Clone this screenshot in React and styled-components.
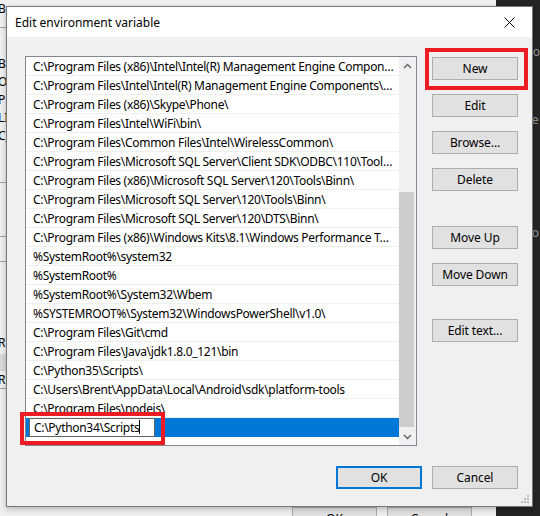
import React from "react";
import styled, { createGlobalStyle } from "styled-components";

const paths = [
	"C:\\Program Files (x86)\\Intel\\Intel(R) Management Engine Components\\DAL",
	"C:\\Program Files\\Intel\\Intel(R) Management Engine Components\\IPT",
	"C:\\Program Files (x86)\\Skype\\Phone\\",
	"C:\\Program Files\\Intel\\WiFi\\bin\\",
	"C:\\Program Files\\Common Files\\Intel\\WirelessCommon\\",
	"C:\\Program Files\\Microsoft SQL Server\\Client SDK\\ODBC\\110\\Tools\\Binn\\",
	"C:\\Program Files (x86)\\Microsoft SQL Server\\120\\Tools\\Binn\\",
	"C:\\Program Files\\Microsoft SQL Server\\120\\Tools\\Binn\\",
	"C:\\Program Files\\Microsoft SQL Server\\120\\DTS\\Binn\\",
	"C:\\Program Files (x86)\\Windows Kits\\8.1\\Windows Performance Toolkit\\",
	"%SystemRoot%\\system32",
	"%SystemRoot%",
	"%SystemRoot%\\System32\\Wbem",
	"%SYSTEMROOT%\\System32\\WindowsPowerShell\\v1.0\\",
	"C:\\Program Files\\Git\\cmd",
	"C:\\Program Files\\Java\\jdk1.8.0_121\\bin",
	"C:\\Python35\\Scripts\\",
	"C:\\Users\\Brent\\AppData\\Local\\Android\\sdk\\platform-tools",
	"C:\\Program Files\\nodejs\\",
];

// bits of the window behind the dialog that peek out on the left
const backRows = [
	{ text: "B", h: 28, line: true },
	{ text: "", h: 27 },
	{ text: "B", h: 18 },
	{ text: "O", h: 18 },
	{ text: "P", h: 18 },
	{ text: "LI", h: 18 },
	{ text: "C_", h: 56, line: true },
	{ text: "", h: 54, line: true },
	{ text: "", h: 25, line: true },
	{ text: "", h: 72 },
	{ text: "R", h: 20 },
	{ text: "", h: 17, shade: true },
	{ text: "Rc", h: 18, line: true },
];

const GlobalStyle = createGlobalStyle`
	body {
		margin: 0;
		background: #f0f0f0;
	}
`;

const Desktop = styled.div`
	position: relative;
	width: 540px;
	height: 516px;
	overflow: hidden;
	display: flex;
	font-family: "Noto Sans", "Liberation Sans", sans-serif;
	font-size: 12px;
	color: #000;
`;

const BackWindow = styled.div`
	width: 502px;
	background: #f0f0f0;
	display: flex;
	flex-direction: column;
`;

const BackRow = styled.div`
	height: ${(p) => p.$h}px;
	flex-shrink: 0;
	box-sizing: border-box;
	margin-left: -2px;
	line-height: 18px;
	background: ${(p) => (p.$shade ? "#dadada" : "transparent")};
	border-bottom: ${(p) => (p.$line ? "1px solid #a0a0a0" : "none")};
	overflow: hidden;
	white-space: nowrap;
`;

const BackFooter = styled.div`
	margin-top: auto;
	display: flex;
	gap: 10px;
	padding-left: 292px;
	margin-bottom: -14px;
`;

const BackButton = styled.div`
	width: 85px;
	height: 23px;
	box-sizing: border-box;
	border: 1px solid #adadad;
	background: #e1e1e1;
	text-align: center;
	line-height: 21px;
`;

const DarkPane = styled.div`
	flex: 1;
	background: #252526;
	color: #9a9a9a;
	padding-left: 31px;
	display: flex;
	flex-direction: column;
`;

const DarkText = styled.div`
	height: ${(p) => p.$h}px;
	line-height: 16px;
	white-space: nowrap;
`;

const Dialog = styled.div`
	position: absolute;
	left: 6px;
	top: 6px;
	width: 527px;
	height: 501px;
	box-sizing: border-box;
	border: 1px solid #777;
	background: #f0f0f0;
	display: flex;
	flex-direction: column;
	box-shadow: 0 2px 6px rgba(0, 0, 0, 0.25);
`;

const TitleBar = styled.div`
	height: 30px;
	flex-shrink: 0;
	background: #fff;
	display: flex;
	align-items: center;
	padding-left: 8px;
`;

const Title = styled.span`
	flex: 1;
	font-size: 12px;
`;

const CloseButton = styled.div`
	width: 46px;
	height: 30px;
	display: flex;
	align-items: center;
	justify-content: center;
`;

const Body = styled.div`
	flex: 1;
	display: grid;
	grid-template-columns: 392px 86px;
	grid-template-rows: 390px auto;
	column-gap: 15px;
	row-gap: 20px;
	padding: 19px 14px 0 18px;
	position: relative;
`;

const ListBox = styled.div`
	box-sizing: border-box;
	border: 1px solid #828790;
	background: #fff;
	display: flex;
`;

const Rows = styled.div`
	flex: 1;
	min-width: 0;
	display: flex;
	flex-direction: column;
`;

const Row = styled.div`
	height: 19px;
	flex-shrink: 0;
	box-sizing: border-box;
	border-bottom: 1px solid #efefef;
	padding: 2px 4px 0 7px;
	line-height: 16px;
	white-space: nowrap;
	overflow: hidden;
	text-overflow: ellipsis;
	letter-spacing: -0.3px;
`;

const SelectedRow = styled.div`
	height: 19px;
	flex-shrink: 0;
	background: #0078d7;
	padding-left: 3px;
	display: flex;
	position: relative;
`;

const EditBox = styled.div`
	width: 126px;
	height: 19px;
	box-sizing: border-box;
	border: 1px solid #646464;
	background: #fff;
	padding: 1px 0 0 4px;
	line-height: 16px;
	letter-spacing: -0.3px;
	white-space: nowrap;
`;

const Caret = styled.span`
	display: inline-block;
	width: 1px;
	height: 14px;
	background: #000;
	vertical-align: -2px;
`;

const Highlight = styled.div`
	position: absolute;
	border: 4px solid #ed1c24;
	pointer-events: none;
	left: ${(p) => p.$l}px;
	top: ${(p) => p.$t}px;
	right: ${(p) => p.$r}px;
	bottom: ${(p) => p.$b}px;
`;

const ScrollBar = styled.div`
	width: 17px;
	flex-shrink: 0;
	background: #f0f0f0;
	display: flex;
	flex-direction: column;
`;

const Arrow = styled.div`
	height: 17px;
	flex-shrink: 0;
	display: flex;
	align-items: center;
	justify-content: center;
`;

const Track = styled.div`
	flex: 1;
	display: flex;
	flex-direction: column;
	padding-top: 118px;
`;

const Thumb = styled.div`
	width: 15px;
	flex: 1;
	background: #cdcdcd;
	margin-bottom: 1px;
`;

const SideButtons = styled.div`
	display: flex;
	flex-direction: column;
	padding-top: 1px;
`;

const Button = styled.div`
	position: relative;
	height: 23px;
	flex-shrink: 0;
	box-sizing: border-box;
	border: ${(p) => (p.$default ? "2px solid #0078d7" : "1px solid #adadad")};
	background: #e1e1e1;
	display: flex;
	align-items: center;
	justify-content: center;
	margin-top: ${(p) => p.$gap || 0}px;
	padding-bottom: 1px;
	letter-spacing: -0.1px;
`;

const Footer = styled.div`
	grid-column: 1 / span 2;
	display: flex;
	justify-content: flex-end;
	gap: 10px;
`;

const FooterButton = styled(Button)`
	width: 86px;
`;

const Grip = styled.svg`
	position: absolute;
	right: 2px;
	bottom: 2px;
`;

function Chevron({ up }) {
	return (
		<svg width="9" height="6" viewBox="0 0 9 6">
			<polyline
				points={up ? "1,5 4.5,1.5 8,5" : "1,1 4.5,4.5 8,1"}
				fill="none"
				stroke="#606060"
				strokeWidth="1.4"
			/>
		</svg>
	);
}

export default function App() {
	return (
		<>
			<GlobalStyle />
			<Desktop>
				<BackWindow>
					{backRows.map((r, i) => (
						<BackRow key={i} $h={r.h} $line={r.line} $shade={r.shade}>
							{r.text}
						</BackRow>
					))}
					<BackFooter>
						<BackButton>OK</BackButton>
						<BackButton>Cancel</BackButton>
					</BackFooter>
				</BackWindow>
				<DarkPane>
					<DarkText $h={44} />
					<DarkText $h={68}>co</DarkText>
					<DarkText $h={113}>re</DarkText>
					<DarkText $h={16}>ro</DarkText>
				</DarkPane>

				<Dialog>
					<TitleBar>
						<Title>Edit environment variable</Title>
						<CloseButton>
							<svg width="11" height="11" viewBox="0 0 11 11">
								<path d="M0.5 0.5 L10.5 10.5 M10.5 0.5 L0.5 10.5" stroke="#000" strokeWidth="1" />
							</svg>
						</CloseButton>
					</TitleBar>

					<Body>
						<ListBox>
							<Rows>
								{paths.map((p) => (
									<Row key={p}>{p}</Row>
								))}
								<SelectedRow>
									<EditBox>
										C:\Python34\Scripts
										<Caret />
									</EditBox>
									<Highlight $l={-6} $t={-6} $r={234} $b={-8} />
								</SelectedRow>
							</Rows>
							<ScrollBar>
								<Arrow>
									<Chevron up />
								</Arrow>
								<Track>
									<Thumb />
								</Track>
								<Arrow>
									<Chevron />
								</Arrow>
							</ScrollBar>
						</ListBox>

						<SideButtons>
							<Button>
								New
								<Highlight $l={-8} $t={-10} $r={-11} $b={-11} />
							</Button>
							<Button $gap={14}>Edit</Button>
							<Button $gap={14}>Browse...</Button>
							<Button $gap={14}>Delete</Button>
							<Button $gap={35}>Move Up</Button>
							<Button $gap={14}>Move Down</Button>
							<Button $gap={33}>Edit text...</Button>
						</SideButtons>

						<Footer>
							<FooterButton $default>OK</FooterButton>
							<FooterButton>Cancel</FooterButton>
						</Footer>

						<Grip width="10" height="10" viewBox="0 0 10 10">
							{[
								[8, 2],
								[5, 5],
								[8, 5],
								[2, 8],
								[5, 8],
								[8, 8],
							].map(([x, y]) => (
								<rect key={`${x}-${y}`} x={x - 1} y={y - 1} width="2" height="2" fill="#b8b8b8" />
							))}
						</Grip>
					</Body>
				</Dialog>
			</Desktop>
		</>
	);
}
